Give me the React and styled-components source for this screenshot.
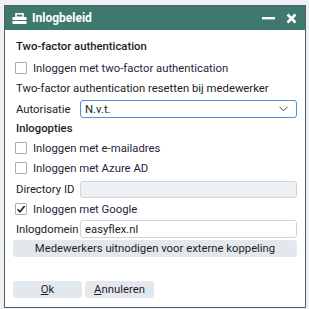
import React from 'react';
import styled, { createGlobalStyle } from 'styled-components';

const GlobalStyle = createGlobalStyle`
body {
    margin: 0;
    background: #eef1f3;
    font-family: Roboto, "Liberation Sans", sans-serif;
    font-size: 11.3px;
    color: #222;
}
`;

const Dialog = styled.div`
box-sizing: border-box;
margin: 5px 0 0 4px;
width: 302px;
height: 303px;
border: 1px solid #5a5f63;
background: #fff;
display: flex;
flex-direction: column;
`;

const TitleBar = styled.div`
height: 24px;
background: #3e786f;
color: #fff;
display: flex;
align-items: center;
padding: 0 7px 0 7px;
font-weight: 700;
font-size: 12px;
`;

const Title = styled.span`
margin-left: 5px;
flex: 1;
`;

const TitleButton = styled.span`
display: flex;
align-items: center;
justify-content: center;
width: 14px;
height: 14px;
margin-left: ${p => p.gap || 0}px;
`;

const Content = styled.div`
flex: 1;
padding: 6px 8px 0 8px;
display: flex;
flex-direction: column;
`;

const Row = styled.div`
height: ${p => p.h || 20}px;
margin-top: ${p => p.mt || 0}px;
display: flex;
align-items: center;
padding-left: 3px;
`;

const Heading = styled.span`
font-weight: 500;
color: #1d1d1d;
`;

const CheckLabel = styled.span`
margin-left: 6px;
color: #241f3a;
`;

const Box = styled.span`
box-sizing: border-box;
width: 12px;
height: 12px;
border: 1px solid #a9aeb2;
border-radius: 1px;
background: #fff;
display: inline-flex;
align-items: center;
justify-content: center;
margin-left: -1px;
`;

const FieldLabel = styled.span`
width: 64px;
flex-shrink: 0;
color: #222;
white-space: nowrap;
`;

const Field = styled.div`
box-sizing: border-box;
width: 217px;
height: ${p => p.h || 18}px;
border: 1px solid ${p => (p.focus ? '#4d8fd8' : '#cfd5da')};
border-radius: 3px;
background: ${p => (p.disabled ? '#eef1f4' : '#fff')};
display: flex;
align-items: center;
padding: 0 8px 0 4px;
color: #1d1d1d;
`;

const FieldValue = styled.span`
flex: 1;
`;

const WideButton = styled.div`
height: 17px;
margin-top: 1px;
background: #e3e8ec;
border-radius: 3px;
display: flex;
align-items: center;
justify-content: center;
color: #1d1d2a;
`;

const Footer = styled.div`
display: flex;
gap: 3px;
padding: 0 8px 9px 8px;
`;

const FooterButton = styled.div`
width: 69px;
height: 17px;
background: #e3e8ec;
border-radius: 3px;
display: flex;
align-items: center;
justify-content: center;
color: #1d1d2a;
`;

const Key = styled.span`
text-decoration: underline;
`;

const LoginIcon = () => (
    <svg width="15" height="11" viewBox="0 0 15 11">
        <rect x="4" y="0.8" width="7" height="3.5" fill="none" stroke="#fff" strokeWidth="1.6" />
        <rect x="0.5" y="4" width="14" height="3" fill="#fff" />
        <rect x="0.5" y="8" width="14" height="3" fill="#fff" />
    </svg>
);

const Checkbox = ({ checked }) => (
    <Box>
        {checked && (
            <svg width="10" height="10" viewBox="0 0 10 10">
                <path d="M1.5 5.2 L4 7.8 L8.6 2" fill="none" stroke="#222" strokeWidth="1.6" />
            </svg>
        )}
    </Box>
);

const CheckRow = ({ checked, label, mt }) => (
    <Row mt={mt}>
        <Checkbox checked={checked} />
        <CheckLabel>{label}</CheckLabel>
    </Row>
);

export default function App() {
    return (
        <>
            <GlobalStyle />
            <Dialog>
                <TitleBar>
                    <LoginIcon />
                    <Title>Inlogbeleid</Title>
                    <TitleButton>
                        <svg width="13" height="3" viewBox="0 0 13 3">
                            <rect width="13" height="2.4" fill="#fff" />
                        </svg>
                    </TitleButton>
                    <TitleButton gap={9}>
                        <svg width="11" height="11" viewBox="0 0 11 11">
                            <path d="M1.5 1.5 L9.5 9.5 M9.5 1.5 L1.5 9.5" stroke="#fff" strokeWidth="2.6" />
                        </svg>
                    </TitleButton>
                </TitleBar>
                <Content>
                    <Row><Heading>Two-factor authentication</Heading></Row>
                    <CheckRow mt={2} label="Inloggen met two-factor authentication" />
                    <Row>Two-factor authentication resetten bij medewerker</Row>
                    <Row mt={1}>
                        <FieldLabel>Autorisatie</FieldLabel>
                        <Field focus>
                            <FieldValue>N.v.t.</FieldValue>
                            <svg width="9" height="6" viewBox="0 0 9 6">
                                <path d="M0.5 0.8 L4.5 4.8 L8.5 0.8" fill="none" stroke="#444" strokeWidth="1" />
                            </svg>
                        </Field>
                    </Row>
                    <Row h={19}><Heading>Inlogopties</Heading></Row>
                    <CheckRow label="Inloggen met e-mailadres" />
                    <CheckRow label="Inloggen met Azure AD" />
                    <Row mt={1}>
                        <FieldLabel>Directory ID</FieldLabel>
                        <Field disabled h={17} />
                    </Row>
                    <CheckRow checked label="Inloggen met Google" />
                    <Row>
                        <FieldLabel>Inlogdomein</FieldLabel>
                        <Field>
                            <FieldValue>easyflex.nl</FieldValue>
                        </Field>
                    </Row>
                    <WideButton>Medewerkers uitnodigen voor externe koppeling</WideButton>
                </Content>
                <Footer>
                    <FooterButton><Key>O</Key>k</FooterButton>
                    <FooterButton><Key>A</Key>nnuleren</FooterButton>
                </Footer>
            </Dialog>
        </>
    );
}
